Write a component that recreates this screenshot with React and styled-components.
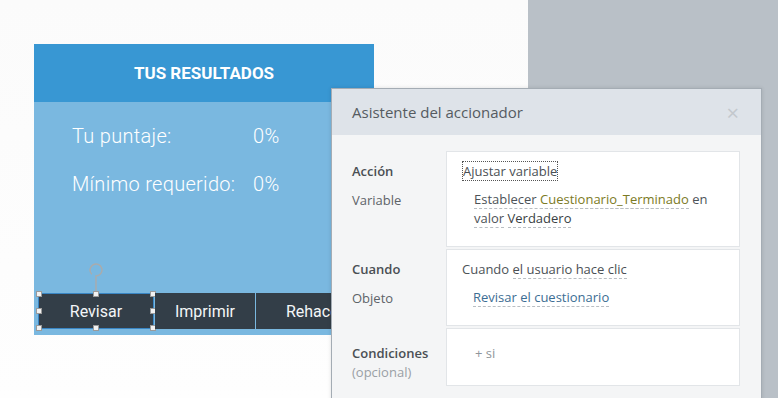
import React from "react";
import styled, { createGlobalStyle } from "styled-components";

const GlobalStyle = createGlobalStyle`
  html, body {
    margin: 0;
    padding: 0;
    overflow: hidden;
  }
`;

const Page = styled.div`
  position: relative;
  display: flex;
  width: 778px;
  height: 398px;
  overflow: hidden;
  background: #b9c0c7;
`;

const Slide = styled.div`
  width: 528px;
  height: 100%;
  box-sizing: border-box;
  padding: 44px 0 0 34px;
  background: linear-gradient(180deg, #fbfbfb 0%, #fefefe 100%);
`;

const Workspace = styled.div`
  flex: 1;
  background: #b9c0c7;
`;

// quiz results card on the slide
const ResultCard = styled.div`
  width: 340px;
  font-family: Roboto, "Open Sans", sans-serif;
  color: #fff;
`;

const CardHeader = styled.div`
  height: 58px;
  display: flex;
  align-items: center;
  justify-content: center;
  background: #3897d3;
  font-size: 17px;
  font-weight: 700;
`;

const CardBody = styled.div`
  height: 233px;
  box-sizing: border-box;
  padding: 21px 0 0 38px;
  background: #7ab8e0;
  display: flex;
  flex-direction: column;
`;

const ScoreRow = styled.div`
  display: grid;
  grid-template-columns: 181px auto;
  font-size: 20px;
  font-weight: 300;
  letter-spacing: 0.3px;
  line-height: 26px;
  margin-bottom: 22px;
`;

const ButtonRow = styled.div`
  display: flex;
  gap: 1px;
  margin: auto 0 6px -34px;
`;

const QuizButton = styled.div`
  position: relative;
  width: ${(p) => p.$w}px;
  height: 36px;
  box-sizing: border-box;
  display: flex;
  align-items: center;
  justify-content: center;
  background: #333e48;
  font-size: 16px;
  color: #f4f6f8;
  border: ${(p) => (p.$selected ? "1px solid #3a86c4" : "none")};
`;

const Handle = styled.span`
  position: absolute;
  width: 6px;
  height: 6px;
  background: #f2f2f2;
  border: 1px solid #9a9a9a;
  box-sizing: border-box;
  left: ${(p) => p.$x};
  top: ${(p) => p.$y};
  transform: translate(-50%, -50%);
`;

const Rotator = styled.svg`
  position: absolute;
  left: 50%;
  top: -31px;
  transform: translateX(-50%);
`;

// trigger wizard dialog
const Dialog = styled.div`
  position: absolute;
  left: 331px;
  top: 88px;
  width: 431px;
  height: 330px;
  box-sizing: border-box;
  border: 1px solid #a4acb4;
  background: #f4f5f6;
  font-family: "Open Sans", "Noto Sans", sans-serif;
  box-shadow: 0 0 4px rgba(0, 0, 0, 0.12);
`;

const DialogHeader = styled.div`
  height: 46px;
  display: flex;
  align-items: center;
  justify-content: space-between;
  padding: 0 22px 0 20px;
  background: #dee3e9;
  font-size: 15px;
  color: #555b61;
`;

const Close = styled.span`
  font-size: 22px;
  color: #c3c8cd;
  line-height: 1;
`;

const DialogBody = styled.div`
  padding: 16px 21px 0 20px;
  display: flex;
  flex-direction: column;
  gap: 2px;
`;

const Section = styled.div`
  display: grid;
  grid-template-columns: 94px 294px;
  font-size: 13px;
  line-height: 20px;
`;

const Labels = styled.div`
  padding-top: ${(p) => p.$top}px;
  display: flex;
  flex-direction: column;
  gap: ${(p) => p.$gap}px;
  color: #5d6368;
`;

const StrongLabel = styled.span`
  font-weight: 600;
  color: #4a4f54;
`;

const Hint = styled.span`
  color: #9aa0a5;
  line-height: 19px;
`;

const Box = styled.div`
  height: ${(p) => p.$h}px;
  box-sizing: border-box;
  padding: ${(p) => p.$top}px 12px 0 15px;
  background: #fff;
  border: 1px solid #e2e5e8;
  display: flex;
  flex-direction: column;
  gap: 9px;
  color: #4d5358;
`;

const Dotted = styled.span`
  align-self: flex-start;
  outline: 1px dotted #555;
  outline-offset: -1px;
  padding: 0 1px;
  color: #4a4f54;
`;

const Statement = styled.div`
  padding-left: ${(p) => p.$indent}px;
  line-height: 19px;
`;

const Link = styled.span`
  color: ${(p) => p.$color || "#4d5358"};
  border-bottom: 1px dashed #b9bec3;
`;

const AddCond = styled.span`
  padding-left: 13px;
  color: #8f959a;
`;

const handles = [
  ["0%", "0%"], ["50%", "0%"], ["100%", "0%"],
  ["0%", "50%"], ["100%", "50%"],
  ["0%", "100%"], ["50%", "100%"], ["100%", "100%"],
];

export default function App() {
  return (
    <>
      <GlobalStyle />
      <Page>
        <Slide>
          <ResultCard>
            <CardHeader>TUS RESULTADOS</CardHeader>
            <CardBody>
              <ScoreRow>
                <span>Tu puntaje:</span>
                <span>0%</span>
              </ScoreRow>
              <ScoreRow>
                <span>Mínimo requerido:</span>
                <span>0%</span>
              </ScoreRow>
              <ButtonRow>
                <QuizButton $w={116} $selected>
                  Revisar
                  <Rotator width="16" height="31" viewBox="0 0 16 31">
                    <path d="M3.76 11.24 A6 6 0 1 1 8 13 L8 31" fill="none" stroke="#ababab" strokeWidth="1.4" />
                  </Rotator>
                  {handles.map(([x, y]) => (
                    <Handle key={x + y} $x={x} $y={y} />
                  ))}
                </QuizButton>
                <QuizButton $w={100}>Imprimir</QuizButton>
                <QuizButton $w={118}>Rehacer</QuizButton>
              </ButtonRow>
            </CardBody>
          </ResultCard>
        </Slide>
        <Workspace />
        <Dialog>
          <DialogHeader>
            <span>Asistente del accionador</span>
            <Close>×</Close>
          </DialogHeader>
          <DialogBody>
            <Section>
              <Labels $top={10} $gap={9}>
                <StrongLabel>Acción</StrongLabel>
                <span>Variable</span>
              </Labels>
              <Box $h={96} $top={9}>
                <Dotted>Ajustar variable</Dotted>
                <Statement $indent={12}>
                  <Link>Establecer <Link $color="#7b7a24">Cuestionario_Terminado</Link></Link> en
                  <br />
                  <Link>valor</Link> <Link $color="#3a3f44">Verdadero</Link>
                </Statement>
              </Box>
            </Section>
            <Section>
              <Labels $top={10} $gap={9}>
                <StrongLabel>Cuando</StrongLabel>
                <span>Objeto</span>
              </Labels>
              <Box $h={77} $top={9}>
                <span>
                  Cuando <Link $color="#4a4f54">el usuario hace clic</Link>
                </span>
                <Statement $indent={11}>
                  <Link $color="#3c6d93">Revisar el cuestionario</Link>
                </Statement>
              </Box>
            </Section>
            <Section>
              <Labels $top={15} $gap={0}>
                <StrongLabel>Condiciones</StrongLabel>
                <Hint>(opcional)</Hint>
              </Labels>
              <Box $h={58} $top={14}>
                <AddCond>+ si</AddCond>
              </Box>
            </Section>
          </DialogBody>
        </Dialog>
      </Page>
    </>
  );
}
